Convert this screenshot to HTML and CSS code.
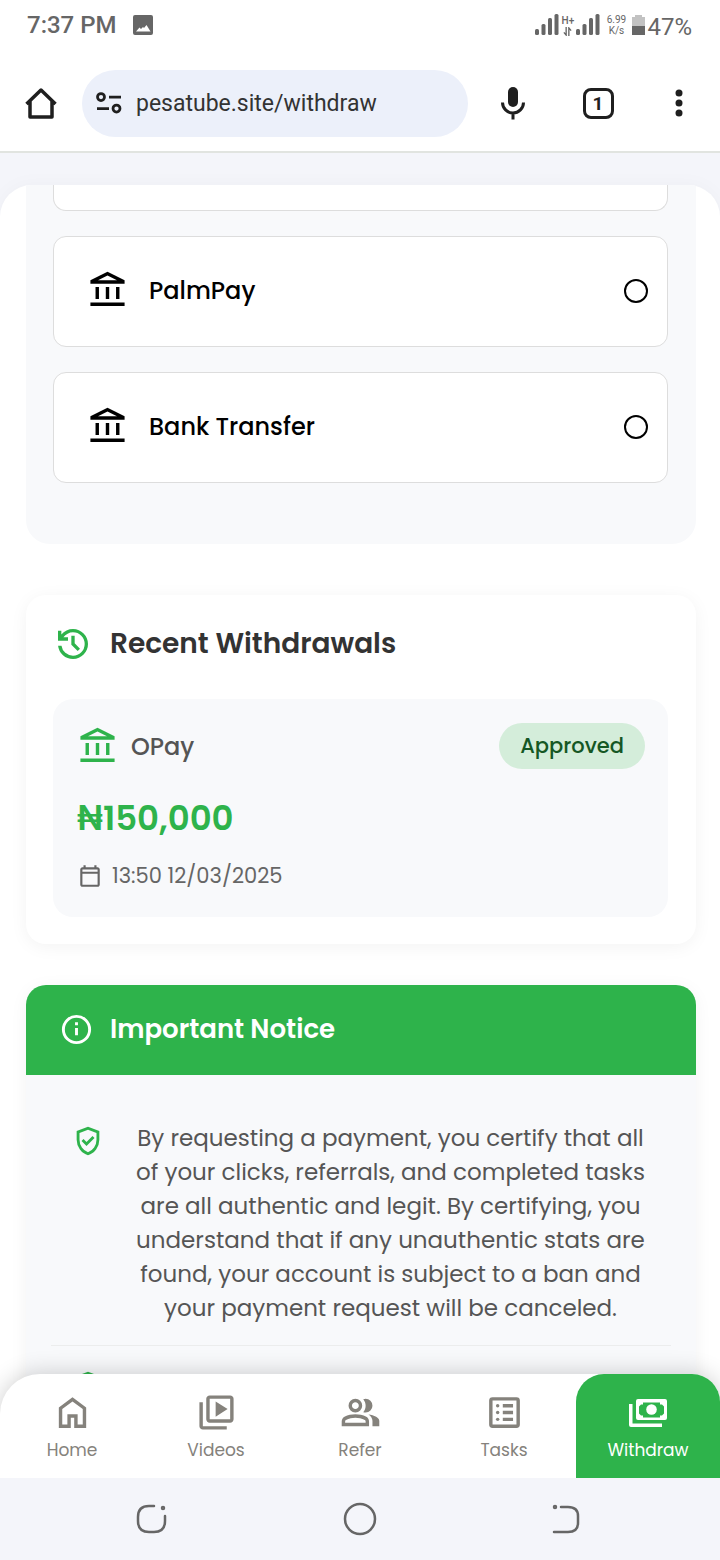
FILE: index.html
```html
<!DOCTYPE html>
<html lang="en">
<head>
    <meta charset="UTF-8">
    <meta name="viewport" content="width=device-width, initial-scale=1.0">
    <title>Withdraw</title>
    <link rel="stylesheet" href="styles.css">
</head>
<body>
    <!-- Shared icons -->
    <svg class="sprite" aria-hidden="true">
        <symbol id="bank" viewBox="0 -960 960 960">
            <path d="M200-280v-280h80v280h-80Zm240 0v-280h80v280h-80ZM80-120v-80h800v80H80Zm600-160v-280h80v280h-80ZM80-640v-80l400-200 400 200v80H80Zm178-80h444L480-830 258-720Z"/>
        </symbol>
        <symbol id="signal" viewBox="0 0 24 22">
            <rect x="0" y="15" width="4" height="6" rx="1.5"/>
            <rect x="6.5" y="10" width="4" height="11" rx="1.5"/>
            <rect x="13" y="4" width="4" height="17" rx="1.5"/>
            <rect x="19.5" y="0" width="4" height="21" rx="1.5"/>
        </symbol>
        <symbol id="shield" viewBox="0 -960 960 960">
            <path d="m438-338 226-226-57-57-169 169-84-84-57 57 141 141Zm42 258q-139-35-229.5-159.5T160-516v-244l320-120 320 120v244q0 152-90.5 276.5T480-80Zm0-84q104-33 172-132t68-220v-189l-240-90-240 90v189q0 121 68 220t172 132Z"/>
        </symbol>
    </svg>

    <header class="status-bar">
        <span class="clock">7:37 PM</span>
        <svg class="photo-icon" viewBox="0 0 20 20"><path fill-rule="evenodd" d="M2 0h16a2 2 0 0 1 2 2v16a2 2 0 0 1-2 2H2a2 2 0 0 1-2-2V2a2 2 0 0 1 2-2zm1 16.5h14.500l-4-6.500-2.500 3-1-1-2 2-1.500-1.500z"/></svg>
        <div class="status-right">
            <svg class="signal"><use href="#signal"/></svg>
            <div class="network">
                <span>H+</span>
                <svg viewBox="0 0 10 10" fill="none" stroke="currentColor" stroke-width="1.5"><path d="M3.500 0v9L1 6M6.500 10V1L9 4"/></svg>
            </div>
            <svg class="signal"><use href="#signal"/></svg>
            <div class="speed"><span>6.99</span><span>K/s</span></div>
            <svg class="battery" viewBox="0 0 13 20"><path fill="#c2c2c2" d="M3 0h7v2h3v9H0V2h3z"/><path d="M0 11h13v9H0z"/></svg>
            <span class="percent">47%</span>
        </div>
    </header>

    <div class="browser-bar">
        <button class="bar-button" aria-label="Home page">
            <svg class="icon-home" viewBox="0 0 32 32" fill="none" stroke="currentColor" stroke-width="3.5" stroke-linejoin="round"><path d="M1.500 17 16 3l14.500 14M5 14.500V30h22V14.500"/></svg>
        </button>
        <label class="address">
            <svg class="icon-site" viewBox="0 0 26 22" fill="none" stroke="currentColor" stroke-width="2.75"><circle cx="5" cy="5" r="3.500"/><circle cx="20.500" cy="16.500" r="3.500"/><path d="M13 5h12M1 16.500h12"/></svg>
            <input type="text" value="pesatube.site/withdraw" aria-label="Address">
        </label>
        <button class="bar-button" aria-label="Voice search">
            <svg class="icon-mic" viewBox="0 0 24 34"><rect x="7" y="1" width="10" height="20" rx="5"/><path d="M1.500 16.500a10.500 10.500 0 0 0 21 0M12 27v6.500" fill="none" stroke="currentColor" stroke-width="3"/></svg>
        </button>
        <button class="bar-button tabs" aria-label="Open tabs"><span>1</span></button>
        <button class="bar-button" aria-label="Menu">
            <svg class="icon-dots" viewBox="0 0 8 28"><circle cx="4" cy="4" r="3.500"/><circle cx="4" cy="14" r="3.500"/><circle cx="4" cy="24" r="3.500"/></svg>
        </button>
    </div>

    <div class="app">
        <main class="sheet">
            <section class="methods">
                <div class="method method-cut"></div>
                <label class="method">
                    <svg class="bank"><use href="#bank"/></svg>
                    <span>PalmPay</span>
                    <input type="radio" name="method" value="palmpay">
                </label>
                <label class="method">
                    <svg class="bank"><use href="#bank"/></svg>
                    <span>Bank Transfer</span>
                    <input type="radio" name="method" value="bank">
                </label>
            </section>

            <section class="recent">
                <h2>
                    <svg viewBox="0 -960 960 960"><path d="M480-120q-138 0-240.5-91.5T122-440h82q14 104 92.5 172T480-200q117 0 198.5-81.5T760-480q0-117-81.5-198.5T480-760q-69 0-129 32t-101 88h110v80H120v-240h80v94q51-64 124.5-99T480-840q75 0 140.5 28.5t114 77q48.5 48.5 77 114T840-480q0 75-28.5 140.5t-77 114q-48.5 48.5-114 77T480-120Zm112-192L440-464v-216h80v184l128 128-56 56Z"/></svg>
                    Recent Withdrawals
                </h2>
                <div class="withdrawal">
                    <div class="withdrawal-top">
                        <svg class="bank"><use href="#bank"/></svg>
                        <span class="provider">OPay</span>
                        <span class="badge">Approved</span>
                    </div>
                    <div class="amount">₦150,000</div>
                    <div class="date">
                        <svg viewBox="0 -960 960 960"><path d="M200-80q-33 0-56.5-23.5T120-160v-560q0-33 23.5-56.5T200-800h40v-80h80v80h320v-80h80v80h40q33 0 56.5 23.5T840-720v560q0 33-23.5 56.5T760-80H200Zm0-80h560v-400H200v400Zm0-480h560v-80H200v80Z"/></svg>
                        13:50 12/03/2025
                    </div>
                </div>
            </section>

            <section class="notice">
                <h2>
                    <svg viewBox="0 0 24 24" fill="none" stroke="currentColor" stroke-width="2"><circle cx="12" cy="12" r="9"/><path d="M12 11v5M12 7v2"/></svg>
                    Important Notice
                </h2>
                <ul>
                    <li>
                        <svg><use href="#shield"/></svg>
                        <p>By requesting a payment, you certify that all of your clicks, referrals, and completed tasks are all authentic and legit. By certifying, you understand that if any unauthentic stats are found, your account is subject to a ban and your payment request will be canceled.</p>
                    </li>
                    <li>
                        <svg><use href="#shield"/></svg>
                        <p>You can make a withdrawal only once per day.</p>
                    </li>
                </ul>
            </section>
        </main>

        <nav class="tab-bar">
            <a href="#home">
                <svg viewBox="0 -960 960 960"><path d="M240-200h120v-240h240v240h120v-360L480-740 240-560v360Zm-80 80v-480l320-240 320 240v480H520v-240h-80v240H160Z"/></svg>
                Home
            </a>
            <a href="#videos">
                <svg viewBox="0 -960 960 960"><path d="m460-380 280-180-280-180v360ZM320-240q-33 0-56.5-23.5T240-320v-480q0-33 23.5-56.5T320-880h480q33 0 56.5 23.5T880-800v480q0 33-23.5 56.5T800-240H320Zm0-80h480v-480H320v480ZM160-80q-33 0-56.5-23.5T80-160v-560h80v560h560v80H160Z"/></svg>
                Videos
            </a>
            <a href="#refer">
                <svg viewBox="0 -960 960 960"><path d="M40-160v-112q0-34 17.5-62.5T104-378q62-31 126-46.5T360-440q66 0 130 15.5T616-378q29 15 46.5 43.5T680-272v112H40Zm720 0v-120q0-44-24.5-84.5T666-434q51 6 96 20.5t84 35.5q36 20 55 44.5t19 53.5v120H760ZM360-480q-66 0-113-47t-47-113q0-66 47-113t113-47q66 0 113 47t47 113q0 66-47 113t-113 47Zm400-160q0 66-47 113t-113 47q-11 0-28-2.5t-28-5.5q27-32 41.5-71t14.5-81q0-42-14.5-81T544-792q14-5 28-6.5t28-1.5q66 0 113 47t47 113ZM120-240h480v-32q0-11-5.5-20T580-306q-54-27-109-40.5T360-360q-56 0-111 13.5T140-306q-9 5-14.5 14t-5.5 20v32Zm240-320q33 0 56.5-23.5T440-640q0-33-23.5-56.5T360-720q-33 0-56.5 23.5T280-640q0 33 23.5 56.5T360-560Z"/></svg>
                Refer
            </a>
            <a href="#tasks">
                <svg viewBox="0 0 24 24"><path fill-rule="evenodd" d="M5 3h14a2 2 0 0 1 2 2v14a2 2 0 0 1-2 2H5a2 2 0 0 1-2-2V5a2 2 0 0 1 2-2zm0 2v14h14V5z"/><path d="M11 7h6v2h-6zM11 11h6v2h-6zM11 15h6v2h-6z"/><circle cx="8" cy="8" r="1"/><circle cx="8" cy="12" r="1"/><circle cx="8" cy="16" r="1"/></svg>
                Tasks
            </a>
            <a href="#withdraw" class="active">
                <svg class="cash" viewBox="0 0 38 41"><path fill-rule="evenodd" d="M9 7h27a2 2 0 0 1 2 2v17a2 2 0 0 1-2 2H9a2 2 0 0 1-2-2V9a2 2 0 0 1 2-2zm5 3.500v2h-2l-2 2v7l2 2h2v2h17v-2h2l2-2v-7l-2-2h-2v-2z"/><circle cx="22.500" cy="17.500" r="5.300"/><path d="M0 12h3.500v19.500H33V35H2a2 2 0 0 1-2-2z"/></svg>
                Withdraw
            </a>
        </nav>
    </div>

    <footer class="system-bar">
        <button aria-label="Recent apps"><svg viewBox="0 0 34 34" fill="none" stroke="currentColor" stroke-width="2.5" stroke-linecap="round"><path d="M19 4h-5Q3 4 3 15v4q0 11 11 11h5q11 0 11-11v-5"/><circle cx="28" cy="6" r="1"/></svg></button>
        <button aria-label="Home screen"><svg viewBox="0 0 34 34" fill="none" stroke="currentColor" stroke-width="2.5"><circle cx="17" cy="17" r="15"/></svg></button>
        <button aria-label="Back"><svg viewBox="0 0 34 34" fill="none" stroke="currentColor" stroke-width="2.5" stroke-linecap="round"><path d="M10 5h7q10 0 10 9v7q0 9-10 9H3"/><circle cx="4" cy="5" r="1"/></svg></button>
    </footer>
</body>
</html>
```

FILE: styles.css
```css
* {
    box-sizing: border-box;
}
body {
    margin: 0;
    height: 100vh;
    display: flex;
    flex-direction: column;
    overflow: hidden;
    font-family: 'Poppins', 'Inter', sans-serif;
    background-color: #fff;
    color: #555;
}
h2, p, ul {
    margin: 0;
    padding: 0;
}
button {
    border: none;
    background: none;
    padding: 0;
    cursor: pointer;
}
svg {
    display: block;
    flex-shrink: 0;
}
svg:not([fill]) {
    fill: currentColor;
}
.sprite {
    position: absolute;
    width: 0;
    height: 0;
}

/* phone status bar */
.status-bar {
    height: 50px;
    flex-shrink: 0;
    display: flex;
    align-items: center;
    padding: 0 28px 0 27px;
    font-family: 'Roboto', sans-serif;
    color: #666;
}
.clock {
    font-size: 24px;
    font-weight: 500;
}
.photo-icon {
    width: 20px;
    height: 20px;
    margin-left: 16px;
}
.status-right {
    display: flex;
    align-items: center;
    margin-left: auto;
}
.signal {
    width: 24px;
    height: 22px;
}
.network {
    width: 17px;
    display: flex;
    flex-direction: column;
    align-items: center;
    font-size: 10px;
    font-weight: 500;
    line-height: 12px;
}
.network svg {
    width: 9px;
    height: 9px;
}
.speed {
    width: 32px;
    display: flex;
    flex-direction: column;
    align-items: center;
    font-size: 10px;
    line-height: 11px;
}
.battery {
    width: 13px;
    height: 20px;
    margin-right: 2px;
}
.percent {
    padding-top: 3px;
    font-size: 24px;
}

/* browser toolbar */
.browser-bar {
    height: 103px;
    flex-shrink: 0;
    display: flex;
    align-items: center;
    padding: 5px 20px 0;
    border-bottom: 2px solid #e1e4e0;
    color: #1f1f1f;
}
.bar-button {
    width: 42px;
    height: 42px;
    display: flex;
    align-items: center;
    justify-content: center;
    color: #1f1f1f;
}
.address {
    flex: 1;
    min-width: 0;
    height: 67px;
    display: flex;
    align-items: center;
    gap: 14px;
    margin: 0 24px 0 20px;
    padding: 0 14px;
    border-radius: 34px;
    background-color: #ecf0fa;
}
.address input {
    flex: 1;
    min-width: 0;
    padding: 0;
    border: none;
    outline: none;
    background: none;
    font-family: 'Roboto', sans-serif;
    font-size: 23px;
    color: #333;
}
.icon-home {
    width: 32px;
    height: 32px;
}
.icon-site {
    width: 26px;
    height: 22px;
}
.icon-mic {
    width: 24px;
    height: 34px;
}
.icon-dots {
    width: 8px;
    height: 28px;
}
.tabs {
    margin: 0 39px 0 43px;
}
.tabs span {
    width: 31px;
    height: 31px;
    border: 3px solid #1f1f1f;
    border-radius: 8px;
    font: bold 19px/25px 'Roboto', sans-serif;
}

/* page */
.app {
    position: relative;
    flex: 1;
    min-height: 0;
    padding-top: 32px;
    overflow: hidden;
    background-color: #f4f5fa;
}
.sheet {
    height: 100%;
    padding: 0 24px 0 26px;
    overflow: hidden;
    border-radius: 32px 32px 0 0;
    background-color: #fff;
    box-shadow: 0 0 20px rgba(0, 0, 0, 0.03);
}
.methods {
    display: flex;
    flex-direction: column;
    gap: 25px;
    padding: 0 28px 61px 27px;
    border-radius: 0 0 24px 24px;
    background-color: #f8f9fb;
}
.method {
    height: 111px;
    display: flex;
    align-items: center;
    gap: 21px;
    padding: 0 19px 2px 33px;
    border: 1px solid #ddd;
    border-radius: 13px;
    background-color: #fff;
    font-size: 24px;
    font-weight: 500;
    color: #000;
}
.method-cut {
    height: 26px;
    border-top: none;
    border-radius: 0 0 13px 13px;
}
.method input {
    appearance: none;
    width: 24px;
    height: 24px;
    margin: 0 0 0 auto;
    border: 2px solid #000;
    border-radius: 50%;
}
.method input:checked {
    background: radial-gradient(#000 5px, transparent 6px);
}
.bank {
    width: 41px;
    height: 41px;
}

.recent {
    margin-top: 51px;
    padding: 27px 28px 27px 27px;
    border-radius: 20px;
    box-shadow: 0 3px 18px rgba(0, 0, 0, 0.05);
}
.recent h2 {
    display: flex;
    align-items: center;
    gap: 17px;
    margin-bottom: 33px;
    font-size: 28px;
    font-weight: 600;
    line-height: 44px;
    color: #333;
}
.recent h2 svg {
    width: 40px;
    height: 40px;
    color: #2eb34b;
}
.withdrawal {
    padding: 24px 23px 24px 24px;
    border-radius: 20px;
    background-color: #f8f9fb;
}
.withdrawal-top {
    display: flex;
    align-items: center;
    gap: 13px;
    color: #2eb34b;
}
.provider {
    font-size: 24px;
    font-weight: 500;
    color: #555;
}
.badge {
    margin-left: auto;
    padding: 0 21px;
    border-radius: 23px;
    background-color: #d4edda;
    font-size: 21px;
    font-weight: 500;
    line-height: 46px;
    color: #155724;
}
.amount {
    margin: 25px 0 17px;
    font-size: 34px;
    font-weight: 600;
    line-height: 48px;
    color: #2eb34b;
}
.date {
    display: flex;
    align-items: center;
    gap: 9px;
    font-size: 21px;
    line-height: 34px;
    color: #666;
}
.date svg {
    width: 26px;
    height: 26px;
}

.notice {
    margin-top: 41px;
    border-radius: 20px;
    background-color: #f8f9fb;
    box-shadow: 0 3px 18px rgba(0, 0, 0, 0.05);
}
.notice h2 {
    display: flex;
    align-items: center;
    gap: 16px;
    padding: 22px 33px 24px;
    border-radius: 20px 20px 0 0;
    background-color: #2eb34b;
    font-size: 26px;
    font-weight: 600;
    line-height: 44px;
    color: #fff;
}
.notice h2 svg {
    width: 35px;
    height: 35px;
}
.notice ul {
    padding: 26px 25px;
    list-style: none;
}
.notice li {
    display: flex;
    gap: 25px;
    padding: 20px;
    border-bottom: 1px solid #eceded;
}
.notice li svg {
    width: 34px;
    height: 34px;
    margin-top: 3px;
    color: #2eb34b;
}
.notice p {
    flex: 1;
    font-size: 23px;
    line-height: 34px;
    text-align: center;
}

/* bottom tabs float over the page */
.tab-bar {
    position: absolute;
    left: 0;
    right: 0;
    bottom: 0;
    display: grid;
    grid-template-columns: repeat(5, 1fr);
    border-radius: 40px 28px 0 0;
    background-color: #fff;
    box-shadow: 0 0 24px rgba(0, 0, 0, 0.2);
}
.tab-bar a {
    height: 104px;
    display: flex;
    flex-direction: column;
    align-items: center;
    gap: 5px;
    padding-top: 18px;
    font-size: 17px;
    line-height: 24px;
    text-decoration: none;
    color: #85827c;
}
.tab-bar svg {
    width: 41px;
    height: 41px;
}
.tab-bar .cash {
    width: 38px;
}
.tab-bar .active {
    border-radius: 28px 28px 0 0;
    background-color: #2eb34b;
    color: #fff;
}

/* phone navigation */
.system-bar {
    height: 82px;
    flex-shrink: 0;
    display: grid;
    grid-template-columns: repeat(3, 1fr);
    justify-items: center;
    align-items: center;
    padding: 0 48px;
    background-color: #f4f5fa;
}
.system-bar button {
    color: #666;
}
.system-bar svg {
    width: 34px;
    height: 34px;
}
```
